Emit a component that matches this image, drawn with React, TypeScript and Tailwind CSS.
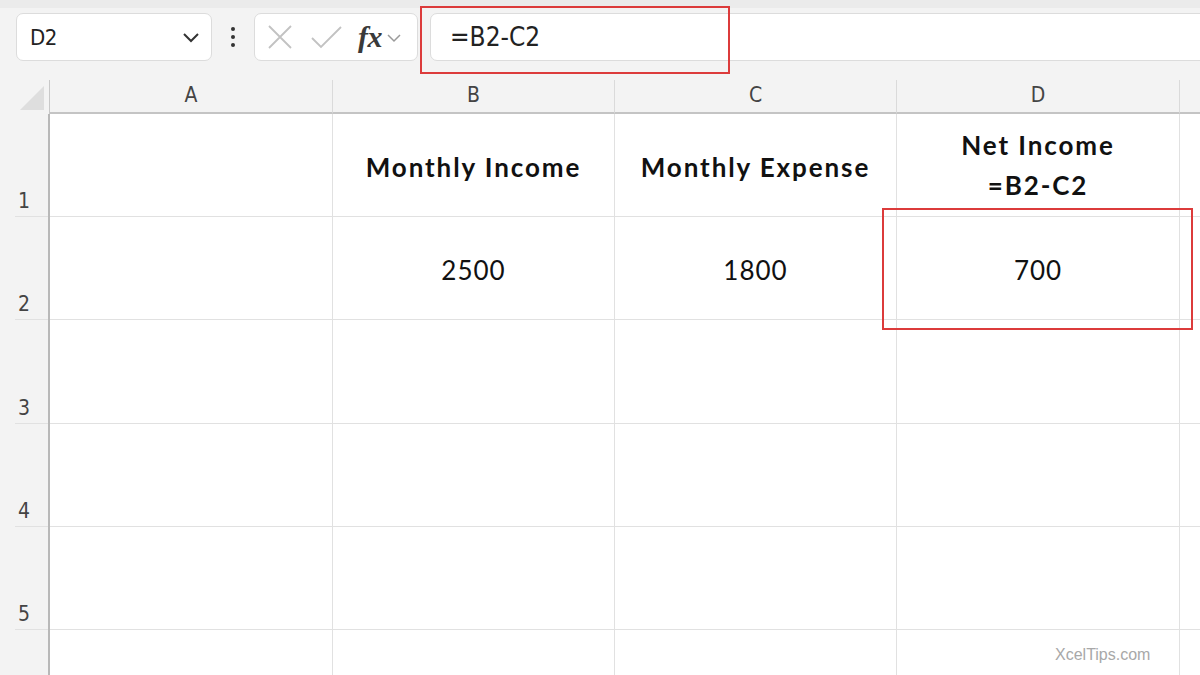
import React from 'react'

const cols = [
  { key: 'A', w: 'w-[283px]' },
  { key: 'B', w: 'w-[282px]' },
  { key: 'C', w: 'w-[282px]' },
  { key: 'D', w: 'w-[283px]' },
]

const rows = [
  { n: 1, h: 'h-[103px]' },
  { n: 2, h: 'h-[103px]' },
  { n: 3, h: 'h-[104px]' },
  { n: 4, h: 'h-[103px]' },
  { n: 5, h: 'h-[103px]' },
  { n: 6, h: 'h-[60px]' },
]

function Cell({ w, children }: { w: string; children?: React.ReactNode }) {
  return (
    <div className={`${w} h-full shrink-0 border-r border-b border-[#e1e1e1] bg-white flex flex-col items-center justify-center text-center`}>
      {children}
    </div>
  )
}

export default function App() {
  const cellFont = "font-['Lato','Noto_Sans',sans-serif] text-[#111]"
  const head = `${cellFont} font-bold text-[26px] tracking-[1.9px]`
  const num = `${cellFont} text-[26px] tracking-[1px] pt-[5px]`
  return (
    <div className="relative w-[1200px] h-[675px] overflow-hidden bg-[#f3f3f3] font-['DejaVu_Sans_Condensed','DejaVu_Sans',sans-serif]">
      {/* Formula bar */}
      <div className="h-[80px] flex flex-col">
        <div className="h-[8px] bg-[#ebebeb]" />
        <div className="flex items-start pt-[5px] pl-[16px]">
          <div className="w-[196px] h-[48px] shrink-0 bg-white border border-[#dcdcdc] rounded-[7px] flex items-center justify-between pl-[13px] pr-[10px]">
            <span className="text-[22px] text-[#222] tracking-[-0.5px]">D2</span>
            <svg width="20" height="12" viewBox="0 0 20 12" fill="none">
              <path d="M3 3l7 7 7-7" stroke="#333" strokeWidth="2" />
            </svg>
          </div>
          <div className="w-[42px] h-[48px] shrink-0 flex flex-col items-center justify-center gap-[4px]">
            <span className="w-[4px] h-[4px] rounded-full bg-[#333]" />
            <span className="w-[4px] h-[4px] rounded-full bg-[#333]" />
            <span className="w-[4px] h-[4px] rounded-full bg-[#333]" />
          </div>
          <div className="w-[164px] h-[48px] shrink-0 bg-white border border-[#dcdcdc] rounded-[7px] flex items-center pl-[12px]">
            <svg width="26" height="26" viewBox="0 0 26 26" fill="none">
              <path d="M2 2l22 22M24 2L2 24" stroke="#c2c2c2" strokeWidth="1.8" />
            </svg>
            <svg width="34" height="26" viewBox="0 0 34 26" fill="none" className="ml-[17px]">
              <path d="M2 14l9 9L31 3" stroke="#c2c2c2" strokeWidth="1.8" />
            </svg>
            <span className="ml-[14px] font-['Liberation_Serif',serif] italic font-bold text-[30px] leading-none text-[#3a3a3a] tracking-[-0.5px]">fx</span>
            <svg width="16" height="10" viewBox="0 0 16 10" fill="none" className="ml-[4px] mt-[2px]">
              <path d="M2 2l6 6 6-6" stroke="#9a9a9a" strokeWidth="1.5" />
            </svg>
          </div>
          <div className="ml-[12px] w-[800px] h-[48px] shrink-0 bg-white border border-[#dcdcdc] rounded-[7px] flex items-center pl-[19px]">
            <span className="text-[26px] text-[#222] [font-stretch:condensed]">=B2-C2</span>
          </div>
        </div>
      </div>

      {/* Column headers */}
      <div className="flex h-[34px]">
        <div className="w-[50px] h-full shrink-0 border-r border-[#c8c8c8] flex items-end justify-start pl-[20px] pb-[4px]">
          <svg width="24" height="24" viewBox="0 0 24 24">
            <path d="M24 0V24H0Z" fill="#dedede" />
          </svg>
        </div>
        {cols.map((c) => (
          <div
            key={c.key}
            className={`${c.w} h-full shrink-0 border-r border-[#dadada] border-b-2 border-b-[#c4c4c4] flex items-center justify-center text-[21px] text-[#444] [font-stretch:condensed]`}
          >
            {c.key}
          </div>
        ))}
        <div className="flex-1 h-full border-b-2 border-b-[#c4c4c4]" />
      </div>

      {/* Grid */}
      {rows.map((r) => (
        <div key={r.n} className={`flex ${r.h}`}>
          <div className="w-[50px] h-full shrink-0 border-r-2 border-[#b8b8b8] flex items-end pl-[18px] pb-[5px] relative">
            <span className="text-[21px] text-[#444] leading-none">{r.n <= 5 ? r.n : ''}</span>
            <div className="absolute left-[15px] right-0 bottom-0 h-px bg-[#e1e1e1]" />
          </div>
          {r.n === 1 ? (
            <>
              <Cell w={cols[0].w} />
              <Cell w={cols[1].w}>
                <span className={`${head} pt-[4px]`}>Monthly Income</span>
              </Cell>
              <Cell w={cols[2].w}>
                <span className={`${head} pt-[4px]`}>Monthly Expense</span>
              </Cell>
              <Cell w={cols[3].w}>
                <span className={`${head} leading-[40px]`}>Net Income</span>
                <span className={`${head} leading-[40px]`}>=B2-C2</span>
              </Cell>
            </>
          ) : r.n === 2 ? (
            <>
              <Cell w={cols[0].w} />
              <Cell w={cols[1].w}>
                <span className={num}>2500</span>
              </Cell>
              <Cell w={cols[2].w}>
                <span className={num}>1800</span>
              </Cell>
              <Cell w={cols[3].w}>
                <span className={num}>700</span>
              </Cell>
            </>
          ) : (
            cols.map((c) => <Cell key={c.key} w={c.w} />)
          )}
          <div className="flex-1 h-full bg-white border-b border-[#e1e1e1]" />
        </div>
      ))}

      {/* Highlight boxes */}
      <div className="absolute left-[420px] top-[6px] w-[310px] h-[68px] border-2 border-[#dc3b3b] pointer-events-none" />
      <div className="absolute left-[882px] top-[208px] w-[311px] h-[122px] border-2 border-[#dc3b3b] pointer-events-none" />

      {/* Watermark */}
      <div className="absolute left-[1055px] top-[643px] font-['Liberation_Sans',sans-serif] text-[16px] text-[#a8a8a8]">
        XcelTips.com
      </div>
    </div>
  )
}
